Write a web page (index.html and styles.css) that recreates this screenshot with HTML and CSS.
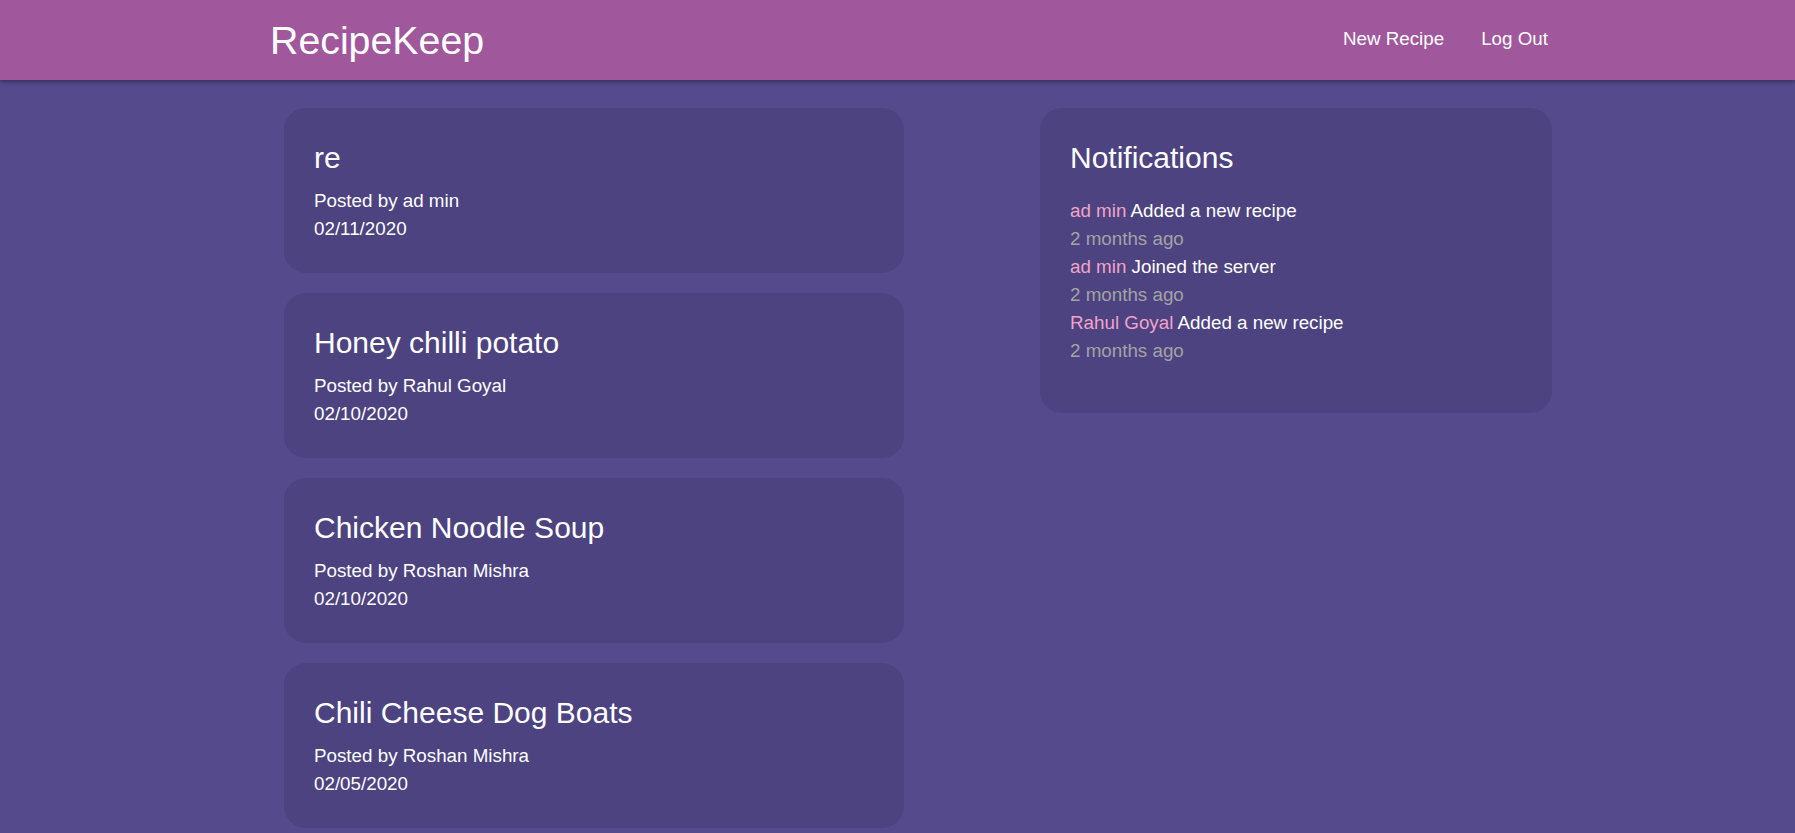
FILE: index.html
```html
<!DOCTYPE html>
<html lang="en">
<head>
<meta charset="utf-8">
<title>RecipeKeep</title>
<link rel="stylesheet" href="styles.css">
</head>
<body>
<header class="topbar">
  <a class="brand" href="#">RecipeKeep</a>
  <nav class="nav">
    <a class="nav-link" href="#">New Recipe</a>
    <a class="nav-link" href="#">Log Out</a>
  </nav>
</header>
<main class="layout">
  <section class="recipes">
    <article class="card">
      <h2 class="card-title">re</h2>
      <p class="meta">Posted by ad min</p>
      <p class="meta">02/11/2020</p>
    </article>
    <article class="card">
      <h2 class="card-title">Honey chilli potato</h2>
      <p class="meta">Posted by Rahul Goyal</p>
      <p class="meta">02/10/2020</p>
    </article>
    <article class="card">
      <h2 class="card-title">Chicken Noodle Soup</h2>
      <p class="meta">Posted by Roshan Mishra</p>
      <p class="meta">02/10/2020</p>
    </article>
    <article class="card">
      <h2 class="card-title">Chili Cheese Dog Boats</h2>
      <p class="meta">Posted by Roshan Mishra</p>
      <p class="meta">02/05/2020</p>
    </article>
  </section>
  <aside class="side">
    <div class="card notif-card">
      <h2 class="card-title">Notifications</h2>
      <ul class="notif-list">
        <li class="notif"><span class="who">ad min</span> Added a new recipe</li>
        <li class="when">2 months ago</li>
        <li class="notif"><span class="who">ad min</span> Joined the server</li>
        <li class="when">2 months ago</li>
        <li class="notif"><span class="who">Rahul Goyal</span> Added a new recipe</li>
        <li class="when">2 months ago</li>
      </ul>
    </div>
  </aside>
</main>
</body>
</html>
```
FILE: styles.css
```css
html, body {
  margin: 0;
  padding: 0;
}
body {
  background: #554a8c;
  color: #ffffff;
  font-family: "Liberation Sans", Arial, sans-serif;
  font-size: 18.8px;
  min-height: 833px;
}
a {
  color: #ffffff;
  text-decoration: none;
}
.topbar {
  height: 80px;
  background: #a0579c;
  box-shadow: 0 2px 4px rgba(0, 0, 0, 0.35);
  display: flex;
  align-items: center;
  justify-content: space-between;
  padding: 0 247px 0 270px;
  position: relative;
  z-index: 1;
}
.brand {
  font-size: 39.3px;
  line-height: normal;
}
.nav {
  display: flex;
  gap: 37px;
  padding-bottom: 2px;
}
.nav-link {
  font-size: 18.8px;
}
.layout {
  display: grid;
  grid-template-columns: 620px 512px;
  column-gap: 136px;
  align-items: start;
  padding: 28px 0 0 284px;
}
.recipes {
  display: flex;
  flex-direction: column;
  gap: 20px;
}
.card {
  background: #4c4380;
  border-radius: 22px;
  padding: 30px 30px 30px;
}
.card-title {
  margin: 0 0 9px;
  font-size: 30px;
  font-weight: normal;
  line-height: 40px;
}
.meta {
  margin: 0;
  line-height: 28px;
}
.notif-card {
  padding-bottom: 48px;
}
.notif-card .card-title {
  margin-bottom: 19px;
}
.notif-list {
  list-style: none;
  margin: 0;
  padding: 0;
  line-height: 28px;
}
.who {
  color: #f2a2c9;
}
.when {
  color: #a3a3a3;
}
```
